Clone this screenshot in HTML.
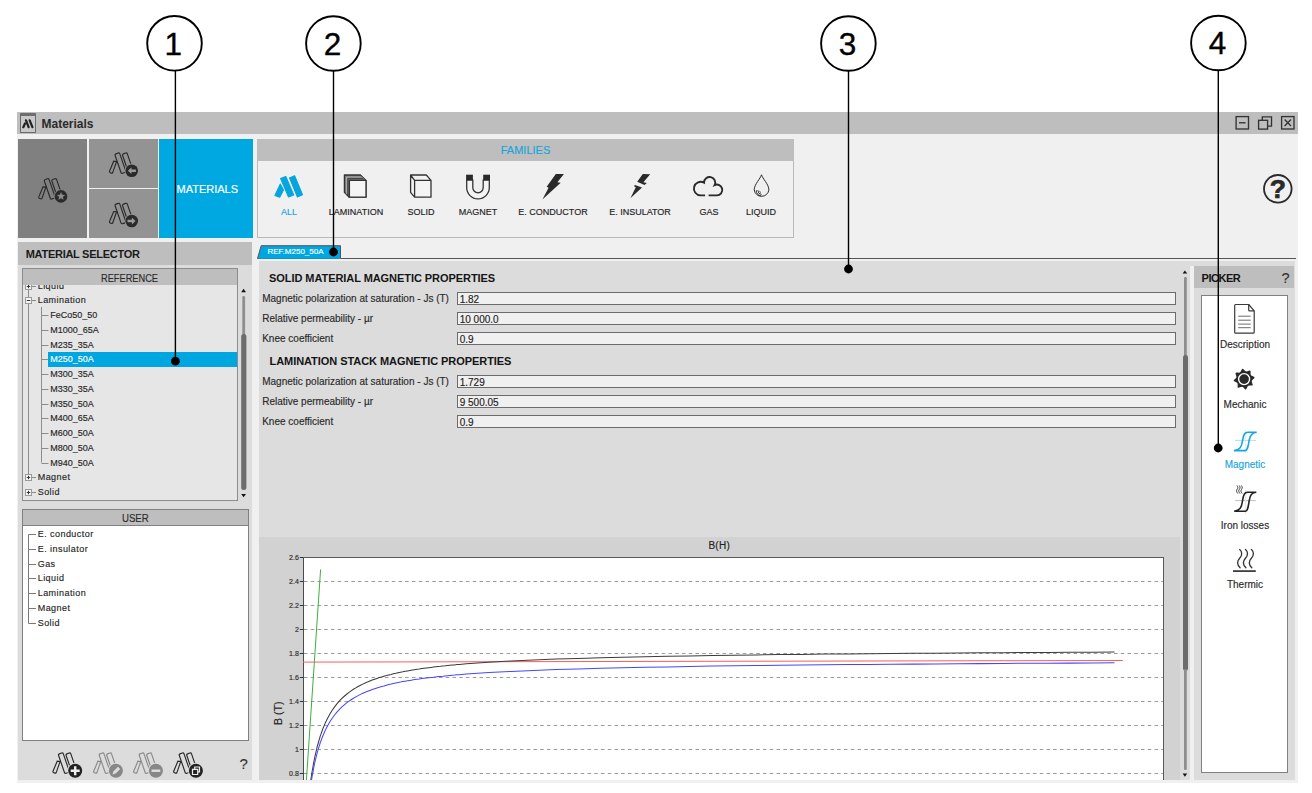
<!DOCTYPE html>
<html><head><meta charset="utf-8">
<style>
*{box-sizing:border-box;margin:0;padding:0}
html,body{width:1312px;height:793px;overflow:hidden;background:#fff;font-family:"Liberation Sans",sans-serif;color:#222}
.a{position:absolute}
.t{position:absolute;white-space:nowrap;line-height:1;-webkit-text-stroke:0.15px currentColor}
.t[style*="bold"]{-webkit-text-stroke:0}
</style></head><body>
<!-- window -->
<div class="a" style="left:17px;top:112px;width:1281px;height:22px;background:#bebebe"></div>
<div class="a" style="left:17px;top:134px;width:1281px;height:649px;background:#f0f0f0"></div>

<!-- tiles -->
<div class="a" style="left:18px;top:139px;width:69px;height:99px;background:#808080"></div>
<div class="a" style="left:89px;top:139px;width:69px;height:48.5px;background:#939393"></div>
<div class="a" style="left:89px;top:189px;width:69px;height:49px;background:#939393"></div>
<div class="a" style="left:159px;top:139px;width:94px;height:99px;background:#00a8e1"></div>


<!-- title bar content -->
<div class="a" style="left:20px;top:113px;width:16px;height:20px;background:#c9c9c9;border:1px solid #6a6a6a;border-top:3px solid #6e6e6e;border-radius:1px"></div>
<svg class="a" style="left:22px;top:119px" width="12" height="10" viewBox="0 0 12 10"><g stroke="#222" stroke-width="2.2" stroke-linecap="round"><line x1="1.3" y1="8.2" x2="3" y2="4.5"/><line x1="4" y1="1.3" x2="6.6" y2="8.2"/><line x1="7.7" y1="1.3" x2="10.4" y2="8.2"/></g></svg>
<div class="t" style="left:41.5px;top:117.5px;font-size:12px;font-weight:bold;color:#2a2a2a">Materials</div>
<svg class="a" style="left:1230px;top:112px" width="68" height="22" viewBox="0 0 68 22">
<g fill="none" stroke="#333" stroke-width="1.35">
<rect x="6.1" y="4.6" width="12.4" height="12.4"/><line x1="9" y1="10.8" x2="15.6" y2="10.8"/>
<rect x="28.6" y="8.3" width="9" height="8.8"/><path d="M32.3 8.3V4.9h9.2v9.2h-3.9"/>
<rect x="51.6" y="4.6" width="12.4" height="12.4"/><path d="M54.6 7.6l6.4 6.4M61 7.6l-6.4 6.4"/>
</g></svg>


<!-- tile icons -->
<svg class="a" style="left:0;top:0" width="260" height="240" viewBox="0 0 260 240">
<defs>
<g id="lgo" fill="none" stroke="#2a2a2a" stroke-width="1.15">
<path d="M1.2 19.2 L5.4 9.2 L8.3 9.4 L4.4 20.6 Q3.9 21.4 3 21.1 L1.6 20.5 Q1 20.1 1.2 19.2Z"/>
<rect x="-2.5" y="-10.3" width="5" height="20.6" rx="1.3" transform="translate(12.1 11.2) rotate(-19)"/>
<rect x="-2.5" y="-10.3" width="5" height="20.6" rx="1.3" transform="translate(19.6 11.2) rotate(-19)"/>
</g>
</defs>
<g transform="translate(37.6 177.7)"><use href="#lgo"/><circle cx="23.4" cy="18.7" r="7.1" fill="#808080"/><circle cx="23.4" cy="18.7" r="6.3" fill="#2a2a2a"/>
<path d="M23.4 14.3l1.2 2.7 2.9.3-2.2 1.9.7 2.9-2.6-1.5-2.6 1.5.7-2.9-2.2-1.9 2.9-.3z" fill="#8a8a8a"/></g>
<g transform="translate(108.3 152)"><use href="#lgo"/><circle cx="23.4" cy="18.7" r="7.1" fill="#939393"/><circle cx="23.4" cy="18.7" r="6.3" fill="#2a2a2a"/>
<path d="M19.6 18.7l3.6-3.4v2.2h4.4v2.4h-4.4v2.2z" fill="#9a9a9a"/></g>
<g transform="translate(108.3 202.3)"><use href="#lgo"/><circle cx="23.4" cy="18.7" r="7.1" fill="#939393"/><circle cx="23.4" cy="18.7" r="6.3" fill="#2a2a2a"/>
<path d="M27.2 18.7l-3.6-3.4v2.2h-4.4v2.4h4.4v2.2z" fill="#9a9a9a"/></g>
</svg>
<div class="t" style="left:176.5px;top:183.5px;font-size:11px;color:#fff">MATERIALS</div>

<!-- families -->
<div class="a" style="left:257px;top:139px;width:537px;height:99px;background:#f0f0f0;border:1px solid #b9b9b9;border-top:none"></div>
<div class="a" style="left:257px;top:139px;width:537px;height:22px;background:#bebebe"></div>


<div class="t" style="left:257px;top:145px;width:537px;text-align:center;font-size:11px;color:#1aa5dc">FAMILIES</div>
<svg class="a" style="left:250px;top:165px" width="550" height="40" viewBox="250 165 550 40">
<g fill="#05a5de" stroke="#05a5de" stroke-width="1.1" stroke-linejoin="round">
<path d="M280.6 178.6 L285.8 176.4 L293.7 195 L288.5 197Z"/>
<path d="M289.5 177.9 L294.6 175.7 L302.5 194.8 L297.3 196.9Z"/>
<path d="M280.3 184.1 L283.5 189.9 L279.7 197.2 L274.9 195.4Z"/>
</g>
<g fill="none" stroke="#333" stroke-width="1.3" stroke-linejoin="round">
<path d="M344.4 175 H360.4 L366 180.5 V197.2 H349.2 L344.4 192.2Z" fill="#777"/>
<path d="M346.4 177 H361.6 L366 181.4 M346.4 177 V194.2" stroke="#bdbdbd" stroke-width="0.8"/>
<path d="M347.9 178.6 H362.9 L366 181.7 M347.9 178.6 V195.7" stroke="#333" stroke-width="0.8"/>
<rect x="349.4" y="180.4" width="16.6" height="16.8" fill="#f4f4f4"/>
<path d="M410.6 175 H426.3 L431 180.4 V197.2 H414.6 L410.6 192.4Z M410.6 175 L414.6 180.4 H431 M414.6 180.4 V197.2" fill="#f4f4f4"/>
<path d="M466.7 180 V187.6 A11.3 11.3 0 0 0 489.3 187.6 V180 H483.2 V187.6 A5.2 5.2 0 0 1 472.8 187.6 V180Z" fill="#f4f4f4"/>
</g>
<g fill="#2a2a2a">
<rect x="466.1" y="174.7" width="6.8" height="5.4"/><rect x="483.2" y="174.7" width="6.8" height="5.4"/>
<path d="M555.8 174 H563.9 L557.4 182.3 L560.7 182.7 L542.4 199.4 L548.6 187.8 L546.7 186.8Z"/>
<path d="M642.8 174.1 L650.2 174.3 L643.4 182.2 L646.8 183.1 L644.5 185 L637.2 181.8Z"/><path d="M634.9 185 L642 187.4 L630.4 198.3 L635.8 187.2 L634 186.3Z"/>
</g>
<path d="M705.1 195.4 H700.7 A6.8 6.8 0 1 1 704 182.65 A5.6 5.6 0 1 1 714.6 185.1 A5.4 5.4 0 1 1 716.9 195.4 H708.6" fill="none" stroke="#2a2a2a" stroke-width="1.9"/>
<g fill="none" stroke="#2a2a2a" stroke-width="1">
<path d="M761.5 174.8 C760.5 178.5 754.2 184.5 754.2 189.8 A7.4 7.4 0 0 0 768.9 189.8 C768.9 184.5 762.5 178.5 761.5 174.8Z"/>
<path d="M756.3 190.2 A5.6 5.6 0 0 0 761.2 195.8" stroke-width="0.9"/>
<path d="M757.9 190.2 A4.3 4.3 0 0 0 761.6 194.5" stroke-width="0.9"/>
<path d="M759.3 191.2 L761 192.6" stroke-width="0.8"/>
</g>
</svg>
<div class="t" style="left:263px;top:208px;width:52px;text-align:center;font-size:9px;color:#1aa5dc">ALL</div>
<div class="t" style="left:325px;top:208px;width:62px;text-align:center;font-size:9px;color:#222">LAMINATION</div>
<div class="t" style="left:395px;top:208px;width:52px;text-align:center;font-size:9px;color:#222">SOLID</div>
<div class="t" style="left:448px;top:208px;width:60px;text-align:center;font-size:9px;color:#222">MAGNET</div>
<div class="t" style="left:513px;top:208px;width:80px;text-align:center;font-size:9px;color:#222">E. CONDUCTOR</div>
<div class="t" style="left:600px;top:208px;width:80px;text-align:center;font-size:9px;color:#222">E. INSULATOR</div>
<div class="t" style="left:683px;top:208px;width:52px;text-align:center;font-size:9px;color:#222">GAS</div>
<div class="t" style="left:735px;top:208px;width:52px;text-align:center;font-size:9px;color:#222">LIQUID</div>
<!-- help -->
<svg class="a" style="left:1260px;top:171px" width="36" height="36" viewBox="1260 171 36 36">
<circle cx="1277.8" cy="188.8" r="13.8" fill="none" stroke="#2a2a2a" stroke-width="1.8"/>
<text x="1277.9" y="198.4" text-anchor="middle" font-family="Liberation Sans" font-weight="bold" font-size="26.5" fill="#2a2a2a" stroke="#2a2a2a" stroke-width="0.7">?</text>
</svg>

<!-- left panel -->
<div class="a" style="left:18px;top:242px;width:234px;height:23px;background:#bebebe"></div>
<div class="a" style="left:18px;top:265px;width:234px;height:515px;background:#dcdcdc"></div>
<div class="a" style="left:22px;top:268px;width:216px;height:233px;background:#e6e6e6;border:1px solid #8c8c8c"></div>
<div class="a" style="left:23px;top:269px;width:214px;height:16px;background:#bebebe"></div>
<div class="a" style="left:22px;top:509px;width:227px;height:232px;background:#fff;border:1px solid #808080"></div>
<div class="a" style="left:23px;top:510px;width:225px;height:16px;background:#bebebe;border-bottom:1px solid #808080"></div>


<div class="t" style="left:25.7px;top:249px;font-size:11px;font-weight:bold;color:#1a1a1a;letter-spacing:-0.27px">MATERIAL SELECTOR</div>
<div class="t" style="left:101.4px;top:272.6px;font-size:11px;color:#2a2a2a;transform:scaleX(0.84);transform-origin:0 0">REFERENCE</div>
<div class="a" style="left:23px;top:285px;width:214px;height:215px;overflow:hidden">
<svg class="a" style="left:0;top:0" width="214" height="215" viewBox="23 285 214 215"><g stroke="#8c8c8c" stroke-width="1" fill="none"><line x1="28.5" y1="285" x2="28.5" y2="474.4"/><line x1="41.5" y1="307" x2="41.5" y2="462.6"/><line x1="31.5" y1="286.5" x2="36" y2="286.5"/><line x1="31.5" y1="300.5" x2="36" y2="300.5"/><line x1="41.5" y1="315.5" x2="48.5" y2="315.5"/><line x1="41.5" y1="330.5" x2="48.5" y2="330.5"/><line x1="41.5" y1="345.5" x2="48.5" y2="345.5"/><line x1="41.5" y1="359.5" x2="48" y2="359.5"/><line x1="41.5" y1="374.5" x2="48.5" y2="374.5"/><line x1="41.5" y1="389.5" x2="48.5" y2="389.5"/><line x1="41.5" y1="404.5" x2="48.5" y2="404.5"/><line x1="41.5" y1="418.5" x2="48.5" y2="418.5"/><line x1="41.5" y1="433.5" x2="48.5" y2="433.5"/><line x1="41.5" y1="448.5" x2="48.5" y2="448.5"/><line x1="41.5" y1="463.5" x2="48.5" y2="463.5"/><line x1="31.5" y1="477.5" x2="36" y2="477.5"/><line x1="31.5" y1="492.5" x2="36" y2="492.5"/></g><rect x="25.5" y="283.5" width="6" height="6" fill="#f4f4f4" stroke="#9a9a9a" stroke-width="1"/><line x1="26.8" y1="286.5" x2="30.2" y2="286.5" stroke="#333" stroke-width="1"/><line x1="28.5" y1="284.8" x2="28.5" y2="288.2" stroke="#333" stroke-width="1"/><rect x="25.5" y="297.5" width="6" height="6" fill="#f4f4f4" stroke="#9a9a9a" stroke-width="1"/><line x1="26.8" y1="300.5" x2="30.2" y2="300.5" stroke="#333" stroke-width="1"/><rect x="25.5" y="474.5" width="6" height="6" fill="#f4f4f4" stroke="#9a9a9a" stroke-width="1"/><line x1="26.8" y1="477.5" x2="30.2" y2="477.5" stroke="#333" stroke-width="1"/><line x1="28.5" y1="475.8" x2="28.5" y2="479.2" stroke="#333" stroke-width="1"/><rect x="25.5" y="489.5" width="6" height="6" fill="#f4f4f4" stroke="#9a9a9a" stroke-width="1"/><line x1="26.8" y1="492.5" x2="30.2" y2="492.5" stroke="#333" stroke-width="1"/><line x1="28.5" y1="490.8" x2="28.5" y2="494.2" stroke="#333" stroke-width="1"/></svg>
<div class="t" style="left:14.7px;top:-3.45px;font-size:9px;color:#262626;letter-spacing:0.45px">Liquid</div>
<div class="t" style="left:14.7px;top:11.30px;font-size:9px;color:#262626;letter-spacing:0.45px">Lamination</div>
<div class="t" style="left:27.2px;top:26.05px;font-size:9px;color:#262626">FeCo50_50</div>
<div class="t" style="left:27.2px;top:40.80px;font-size:9px;color:#262626">M1000_65A</div>
<div class="t" style="left:27.2px;top:55.55px;font-size:9px;color:#262626">M235_35A</div>
<div class="a" style="left:25px;top:66.8px;width:189px;height:15px;background:#00a6df"></div>
<div class="t" style="left:27.2px;top:70.30px;font-size:9px;color:#fff">M250_50A</div>
<div class="t" style="left:27.2px;top:85.05px;font-size:9px;color:#262626">M300_35A</div>
<div class="t" style="left:27.2px;top:99.80px;font-size:9px;color:#262626">M330_35A</div>
<div class="t" style="left:27.2px;top:114.55px;font-size:9px;color:#262626">M350_50A</div>
<div class="t" style="left:27.2px;top:129.30px;font-size:9px;color:#262626">M400_65A</div>
<div class="t" style="left:27.2px;top:144.05px;font-size:9px;color:#262626">M600_50A</div>
<div class="t" style="left:27.2px;top:158.80px;font-size:9px;color:#262626">M800_50A</div>
<div class="t" style="left:27.2px;top:173.55px;font-size:9px;color:#262626">M940_50A</div>
<div class="t" style="left:14.7px;top:188.30px;font-size:9px;color:#262626;letter-spacing:0.45px">Magnet</div>
<div class="t" style="left:14.7px;top:203.05px;font-size:9px;color:#262626;letter-spacing:0.45px">Solid</div>
</div>
<!-- ref scrollbar -->
<svg class="a" style="left:238px;top:284px" width="12" height="220" viewBox="238 284 12 220">
<path d="M241.2 292.3 L243.6 288.8 L246 292.3Z" fill="#111"/>
<rect x="242.3" y="296" width="2.8" height="40" rx="1.2" fill="#8e8e8e"/>
<rect x="241.2" y="334" width="5.2" height="156" rx="2.5" fill="#6c6c6c"/>
<path d="M241.2 494 L243.6 497.3 L246 494Z" fill="#111"/>
</svg>
<div class="t" style="left:122px;top:512.6px;font-size:11px;color:#2a2a2a;transform:scaleX(0.875);transform-origin:0 0">USER</div>
<svg class="a" style="left:0;top:0" width="260" height="793" viewBox="0 0 260 793"><g stroke="#7a7a7a" stroke-width="1" fill="none"><path d="M36 534.5 H28.5 V623.5 H36"/><line x1="28.5" y1="549.5" x2="36" y2="549.5"/><line x1="28.5" y1="564.5" x2="36" y2="564.5"/><line x1="28.5" y1="578.5" x2="36" y2="578.5"/><line x1="28.5" y1="593.5" x2="36" y2="593.5"/><line x1="28.5" y1="608.5" x2="36" y2="608.5"/></g></svg>
<div class="t" style="left:37.7px;top:530.00px;font-size:9px;color:#262626;letter-spacing:0.45px">E. conductor</div>
<div class="t" style="left:37.7px;top:544.75px;font-size:9px;color:#262626;letter-spacing:0.45px">E. insulator</div>
<div class="t" style="left:37.7px;top:559.50px;font-size:9px;color:#262626;letter-spacing:0.45px">Gas</div>
<div class="t" style="left:37.7px;top:574.25px;font-size:9px;color:#262626;letter-spacing:0.45px">Liquid</div>
<div class="t" style="left:37.7px;top:589.00px;font-size:9px;color:#262626;letter-spacing:0.45px">Lamination</div>
<div class="t" style="left:37.7px;top:603.75px;font-size:9px;color:#262626;letter-spacing:0.45px">Magnet</div>
<div class="t" style="left:37.7px;top:618.50px;font-size:9px;color:#262626;letter-spacing:0.45px">Solid</div>
<!-- bottom toolbar -->
<svg class="a" style="left:0;top:740px" width="260" height="45" viewBox="0 740 260 45">
<g transform="translate(51.8 752)"><use href="#lgo"/><circle cx="23.4" cy="18.7" r="7.9" fill="#dcdcdc"/><circle cx="23.4" cy="18.7" r="7" fill="#222"/><path d="M22.2 14.2h2.4v3.3h3.3v2.4h-3.3v3.3h-2.4v-3.3h-3.3v-2.4h3.3z" fill="#eee"/></g>
<g transform="translate(92.5 752)" opacity="0.45"><use href="#lgo"/><circle cx="23.4" cy="18.7" r="7.9" fill="#dcdcdc"/><circle cx="23.4" cy="18.7" r="7" fill="#222"/><path d="M20 22.5l1-3.2 4.5-4.5 2.2 2.2-4.5 4.5z" fill="#ddd"/></g>
<g transform="translate(132.5 752)" opacity="0.45"><use href="#lgo"/><circle cx="23.4" cy="18.7" r="7.9" fill="#dcdcdc"/><circle cx="23.4" cy="18.7" r="7" fill="#222"/><rect x="19" y="17.5" width="8.8" height="2.5" fill="#ddd"/></g>
<g transform="translate(172.5 752)"><use href="#lgo"/><circle cx="23.4" cy="18.7" r="7.9" fill="#dcdcdc"/><circle cx="23.4" cy="18.7" r="7" fill="#222"/><path d="M20 17.3h5.2v5.2h-5.2z M22.2 17.3v-2.3h4.8v4.8h-1.8" fill="none" stroke="#eee" stroke-width="1.2"/></g>
</svg>
<div class="t" style="left:239.6px;top:756px;font-size:15px;color:#333">?</div>

<!-- property panel -->
<div class="a" style="left:259px;top:261px;width:1036px;height:519px;background:#dcdcdc"></div>
<div class="a" style="left:259px;top:537px;width:921px;height:243px;background:#d2d2d2"></div>
<div class="a" style="left:341px;top:258px;width:955px;height:1px;background:#555"></div>


<!-- tab -->
<svg class="a" style="left:255px;top:243px" width="90" height="18" viewBox="255 243 90 18">
<path d="M257.5 258.5 L261.2 245.7 H340.5 V258.5Z" fill="#00a6df" stroke="#555" stroke-width="1"/>
<rect x="258.6" y="257.2" width="81.4" height="1.6" fill="#00a6df"/>
</svg>
<div class="t" style="left:267.5px;top:247.6px;font-size:8px;color:#fff">REF.M250_50A</div>
<div class="t" style="left:269px;top:272.6px;font-size:11px;font-weight:bold;color:#151515;letter-spacing:-0.06px">SOLID MATERIAL MAGNETIC PROPERTIES</div>
<div class="t" style="left:269.5px;top:355.7px;font-size:11px;font-weight:bold;color:#151515;letter-spacing:-0.06px">LAMINATION STACK MAGNETIC PROPERTIES</div>
<div class="t" style="left:262.2px;top:293.8px;font-size:10px;color:#2a2a2a">Magnetic polarization at saturation - Js (T)</div>
<div class="a" style="left:456.8px;top:292px;width:719.5px;height:13px;background:#f0f0f0;border:1px solid #6c6c6c"></div>
<div class="t" style="left:459.7px;top:294.5px;font-size:10px;color:#222">1.82</div>
<div class="t" style="left:262.2px;top:313.9px;font-size:10px;color:#2a2a2a">Relative permeability - µr</div>
<div class="a" style="left:456.8px;top:312px;width:719.5px;height:13px;background:#f0f0f0;border:1px solid #6c6c6c"></div>
<div class="t" style="left:459.7px;top:314.5px;font-size:10px;color:#222">10 000.0</div>
<div class="t" style="left:262.2px;top:333.9px;font-size:10px;color:#2a2a2a">Knee coefficient</div>
<div class="a" style="left:456.8px;top:332px;width:719.5px;height:13px;background:#f0f0f0;border:1px solid #6c6c6c"></div>
<div class="t" style="left:459.7px;top:334.5px;font-size:10px;color:#222">0.9</div>
<div class="t" style="left:262.2px;top:377.1px;font-size:10px;color:#2a2a2a">Magnetic polarization at saturation - Js (T)</div>
<div class="a" style="left:456.8px;top:375px;width:719.5px;height:13px;background:#f0f0f0;border:1px solid #6c6c6c"></div>
<div class="t" style="left:459.7px;top:377.5px;font-size:10px;color:#222">1.729</div>
<div class="t" style="left:262.2px;top:397.1px;font-size:10px;color:#2a2a2a">Relative permeability - µr</div>
<div class="a" style="left:456.8px;top:395px;width:719.5px;height:13px;background:#f0f0f0;border:1px solid #6c6c6c"></div>
<div class="t" style="left:459.7px;top:397.5px;font-size:10px;color:#222">9 500.05</div>
<div class="t" style="left:262.2px;top:417.1px;font-size:10px;color:#2a2a2a">Knee coefficient</div>
<div class="a" style="left:456.8px;top:415px;width:719.5px;height:13px;background:#f0f0f0;border:1px solid #6c6c6c"></div>
<div class="t" style="left:459.7px;top:417.5px;font-size:10px;color:#222">0.9</div>
<!-- prop scrollbar -->
<svg class="a" style="left:1180px;top:262px" width="12" height="520" viewBox="1180 262 12 520">
<path d="M1182.6 273.6 L1184.9 270.4 L1187.2 273.6Z" fill="#111"/>
<rect x="1184" y="277" width="2.8" height="80" rx="1.2" fill="#8e8e8e"/>
<rect x="1183" y="355" width="5" height="316" rx="2.4" fill="#6c6c6c"/>
<rect x="1184" y="669" width="2.8" height="101" rx="1.2" fill="#8e8e8e"/>
<path d="M1182.6 773.6 L1184.9 776.8 L1187.2 773.6Z" fill="#111"/>
</svg>
<!-- chart labels -->
<div class="t" style="left:708.4px;top:540.8px;font-size:10px;color:#222;letter-spacing:0.3px">B(H)</div>
<div class="t" style="left:258.8px;top:553.5px;width:40px;text-align:right;font-size:7px;color:#2a2a2a">2.6</div>
<div class="t" style="left:258.8px;top:577.5px;width:40px;text-align:right;font-size:7px;color:#2a2a2a">2.4</div>
<div class="t" style="left:258.8px;top:601.5px;width:40px;text-align:right;font-size:7px;color:#2a2a2a">2.2</div>
<div class="t" style="left:258.8px;top:625.5px;width:40px;text-align:right;font-size:7px;color:#2a2a2a">2</div>
<div class="t" style="left:258.8px;top:649.5px;width:40px;text-align:right;font-size:7px;color:#2a2a2a">1.8</div>
<div class="t" style="left:258.8px;top:673.5px;width:40px;text-align:right;font-size:7px;color:#2a2a2a">1.6</div>
<div class="t" style="left:258.8px;top:697.5px;width:40px;text-align:right;font-size:7px;color:#2a2a2a">1.4</div>
<div class="t" style="left:258.8px;top:721.5px;width:40px;text-align:right;font-size:7px;color:#2a2a2a">1.2</div>
<div class="t" style="left:258.8px;top:745.5px;width:40px;text-align:right;font-size:7px;color:#2a2a2a">1</div>
<div class="t" style="left:258.8px;top:769.5px;width:40px;text-align:right;font-size:7px;color:#2a2a2a">0.8</div>
<svg class="a" style="left:295px;top:550px" width="12" height="235" viewBox="295 550 12 235"><g stroke="#333" stroke-width="1"><line x1="299.8" x2="303" y1="557.5" y2="557.5"/><line x1="299.8" x2="303" y1="581.5" y2="581.5"/><line x1="299.8" x2="303" y1="605.5" y2="605.5"/><line x1="299.8" x2="303" y1="629.5" y2="629.5"/><line x1="299.8" x2="303" y1="653.5" y2="653.5"/><line x1="299.8" x2="303" y1="677.5" y2="677.5"/><line x1="299.8" x2="303" y1="701.5" y2="701.5"/><line x1="299.8" x2="303" y1="725.5" y2="725.5"/><line x1="299.8" x2="303" y1="749.5" y2="749.5"/><line x1="299.8" x2="303" y1="773.5" y2="773.5"/></g></svg>
<div class="t" style="left:266px;top:708px;width:24px;text-align:center;font-size:10.5px;color:#222;transform:rotate(-90deg);transform-origin:50% 50%">B (T)</div>

<!-- picker -->
<div class="a" style="left:1190px;top:265.8px;width:4px;height:514.2px;background:#f0f0f0"></div>
<div class="a" style="left:1194px;top:265.8px;width:100.4px;height:22.2px;background:#bebebe"></div>
<div class="a" style="left:1201px;top:295px;width:87px;height:478px;background:#fff;border:1px solid #808080"></div>

<!-- chart -->
<div class="a" style="left:303px;top:557px;width:861px;height:223px;background:#fff;border-left:1.5px solid #4a4a4a;border-top:1px solid #5a5a5a;border-right:1px solid #5a5a5a"></div>
<svg class="a" style="left:0;top:0" width="1312" height="793" viewBox="0 0 1312 793">
<defs><clipPath id="pc"><rect x="303" y="557" width="861" height="223"/></clipPath></defs>
<g stroke="#9a9a9a" stroke-width="1" stroke-dasharray="3.5 3.25">
<line x1="304" x2="1163" y1="581.5" y2="581.5"/><line x1="304" x2="1163" y1="605.5" y2="605.5"/>
<line x1="304" x2="1163" y1="629.5" y2="629.5"/><line x1="304" x2="1163" y1="653.5" y2="653.5"/>
<line x1="304" x2="1163" y1="677.5" y2="677.5"/><line x1="304" x2="1163" y1="701.5" y2="701.5"/>
<line x1="304" x2="1163" y1="725.5" y2="725.5"/><line x1="304" x2="1163" y1="749.5" y2="749.5"/>
<line x1="304" x2="1163" y1="773.5" y2="773.5"/>
</g>
<g clip-path="url(#pc)" fill="none">
<line x1="303" y1="662.1" x2="1122.75" y2="660.5" stroke="#ff5a5a" stroke-width="1"/>
<path d="M300.4 869 L320.6 569.4" stroke="#3cb03c" stroke-width="1"/>
<path d="M309.2 792.0L309.6 788.6L310.1 785.5L310.5 782.4L310.9 779.5L311.3 776.7L311.7 774.0L312.1 771.5L312.6 769.0L313.0 766.6L313.4 764.3L313.8 762.1L314.2 760.0L314.6 758.0L315.0 756.0L315.5 754.1L315.9 752.3L316.3 750.5L316.7 748.8L317.1 747.1L317.5 745.5L318.0 744.0L318.4 742.5L318.8 741.0L319.2 739.6L319.6 738.3L320.0 736.9L320.4 735.6L320.9 734.4L321.3 733.2L321.7 732.0L322.1 730.8L322.5 729.7L322.9 728.6L323.4 727.6L323.8 726.6L324.2 725.6L324.6 724.6L325.0 723.6L325.4 722.7L325.8 721.8L326.3 720.9L326.7 720.0L327.1 719.2L327.5 718.4L329.9 714.1L332.2 710.3L334.6 706.9L336.9 703.9L339.3 701.2L341.6 698.7L344.0 696.5L346.3 694.5L348.7 692.6L351.1 690.9L353.4 689.3L355.8 687.9L358.1 686.5L360.5 685.2L362.8 684.1L365.2 683.0L367.5 681.9L369.9 681.0L372.2 680.1L374.6 679.2L376.9 678.4L379.3 677.6L381.7 676.9L384.0 676.2L386.4 675.6L388.7 674.9L391.1 674.4L393.4 673.8L395.8 673.3L398.1 672.7L400.5 672.2L402.8 671.8L405.2 671.3L407.5 670.9L409.9 670.5L412.3 670.1L414.6 669.7L417.0 669.3L419.3 669.0L421.7 668.6L424.0 668.3L426.4 668.0L428.7 667.7L431.1 667.4L433.4 667.1L435.8 666.8L438.2 666.5L440.5 666.3L442.9 666.0L445.2 665.8L447.6 665.5L449.9 665.3L452.3 665.1L454.6 664.9L457.0 664.6L459.3 664.4L461.7 664.2L464.0 664.0L466.4 663.8L488.7 662.3L511.1 661.0L533.4 660.0L555.8 659.1L578.1 658.4L600.5 657.7L622.8 657.2L645.2 656.7L667.5 656.2L689.9 655.9L712.2 655.5L734.6 655.2L756.9 654.9L779.3 654.6L801.6 654.4L824.0 654.1L846.3 653.9L868.7 653.7L891.0 653.5L913.4 653.3L935.7 653.2L958.1 653.0L980.4 652.8L1002.8 652.7L1025.1 652.5L1047.5 652.4L1069.8 652.3L1092.2 652.2L1114.5 652.0" stroke="#3c3c3c" stroke-width="1.05"/>
<path d="M309.6 792.7L310.1 789.6L310.5 786.7L310.9 784.0L311.3 781.3L311.7 778.8L312.1 776.3L312.6 774.0L313.0 771.7L313.4 769.6L313.8 767.5L314.2 765.5L314.6 763.5L315.0 761.7L315.5 759.9L315.9 758.1L316.3 756.4L316.7 754.8L317.1 753.2L317.5 751.7L318.0 750.2L318.4 748.8L318.8 747.4L319.2 746.1L319.6 744.8L320.0 743.5L320.4 742.3L320.9 741.1L321.3 740.0L321.7 738.8L322.1 737.8L322.5 736.7L322.9 735.7L323.4 734.7L323.8 733.7L324.2 732.7L324.6 731.8L325.0 730.9L325.4 730.0L325.8 729.2L326.3 728.3L326.7 727.5L327.1 726.7L327.5 725.9L329.9 721.8L332.2 718.2L334.6 715.0L336.9 712.1L339.3 709.6L341.6 707.2L344.0 705.1L346.3 703.2L348.7 701.4L351.1 699.8L353.4 698.3L355.8 696.9L358.1 695.6L360.5 694.4L362.8 693.3L365.2 692.3L367.5 691.3L369.9 690.4L372.2 689.5L374.6 688.7L376.9 687.9L379.3 687.2L381.7 686.5L384.0 685.9L386.4 685.2L388.7 684.6L391.1 684.1L393.4 683.5L395.8 683.0L398.1 682.5L400.5 682.1L402.8 681.6L405.2 681.2L407.5 680.8L409.9 680.4L412.3 680.0L414.6 679.6L417.0 679.3L419.3 679.0L421.7 678.6L424.0 678.3L426.4 678.0L428.7 677.7L431.1 677.4L433.4 677.2L435.8 676.9L438.2 676.6L440.5 676.4L442.9 676.2L445.2 675.9L447.6 675.7L449.9 675.5L452.3 675.3L454.6 675.1L457.0 674.8L459.3 674.7L461.7 674.5L464.0 674.3L466.4 674.1L488.7 672.6L511.1 671.4L533.4 670.4L555.8 669.6L578.1 668.9L600.5 668.3L622.8 667.7L645.2 667.3L667.5 666.9L689.9 666.5L712.2 666.1L734.6 665.8L756.9 665.6L779.3 665.3L801.6 665.0L824.0 664.8L846.3 664.6L868.7 664.4L891.0 664.2L913.4 664.1L935.7 663.9L958.1 663.7L980.4 663.6L1002.8 663.4L1025.1 663.3L1047.5 663.2L1069.8 663.1L1092.2 662.9L1114.5 662.8" stroke="#4646ff" stroke-width="1.05"/>
</g>
</svg>


<div class="t" style="left:1201.5px;top:272.6px;font-size:11px;font-weight:bold;color:#151515;letter-spacing:-0.45px">PICKER</div>
<div class="t" style="left:1281.6px;top:270.6px;font-size:14.5px;color:#333">?</div>
<svg class="a" style="left:1202px;top:296px" width="86" height="300" viewBox="1202 296 86 300">
<g fill="none" stroke="#3a3a3a" stroke-width="1.2" stroke-linejoin="round">
<path d="M1248.7 304.5 H1235.6 Q1234.7 304.5 1234.7 305.4 V332.3 Q1234.7 333.2 1235.6 333.2 H1253.3 Q1254.2 333.2 1254.2 332.3 V310.9 Z"/>
<path d="M1248.7 304.5 V310 Q1248.7 310.9 1249.6 310.9 H1254.2"/>
</g>
<g stroke="#6a6a6a" stroke-width="1"><line x1="1238.2" x2="1250.7" y1="316.2" y2="316.2"/><line x1="1238.2" x2="1250.7" y1="320.2" y2="320.2"/><line x1="1238.2" x2="1250.7" y1="324.1" y2="324.1"/><line x1="1238.2" x2="1250.7" y1="327.7" y2="327.7"/></g>
<g transform="translate(1244.1 379.1)" fill="#2a2a2a"><path d="M-1.52 -9.58 L1.54 -6.42 L5.70 -7.85 L5.63 -3.45 L9.58 -1.52 L6.42 1.54 L7.85 5.70 L3.45 5.63 L1.52 9.58 L-1.54 6.42 L-5.70 7.85 L-5.63 3.45 L-9.58 1.52 L-6.42 -1.54 L-7.85 -5.70 L-3.45 -5.63Z" stroke="#2a2a2a" stroke-width="1.6" stroke-linejoin="round"/><circle r="7.9"/><circle r="5.5" fill="none" stroke="#fff" stroke-width="1.4"/></g>
<g stroke="#9bd6ef" stroke-width="0.8"><line x1="1235" x2="1256" y1="440.4" y2="440.4"/></g>
<g stroke="#d0ecf8" stroke-width="0.8"><line x1="1245.4" x2="1245.4" y1="429.5" y2="453.5"/></g>
<path d="M1234 450.6 C1240 449.8 1241.6 447 1242.5 441 C1243.5 434 1244.8 432.3 1248 432.2 H1256.7 C1252.5 432.4 1250.3 434.3 1249.2 440 C1248.2 447 1247.4 450.5 1245 450.6 Z" fill="none" stroke="#1aa5dc" stroke-width="1.6"/>
<g stroke="#aaa" stroke-width="0.8"><line x1="1235.3" x2="1255.8" y1="500.6" y2="500.6"/></g>
<g stroke="#ddd" stroke-width="0.8"><line x1="1245.6" x2="1245.6" y1="490" y2="514"/></g>
<path d="M1234.2 511.2 C1240 510.5 1241.6 507.5 1242.5 501 C1243.5 494 1244.6 492.4 1247.6 492.3 H1256.3 C1252 492.5 1250.2 494.5 1249.2 500.6 C1248.2 507.5 1247.5 511.1 1245.6 511.2 Z" fill="none" stroke="#222" stroke-width="1.6"/>
<g fill="none" stroke="#333" stroke-width="1">
<path d="M1237 485.5 C1238.2 487 1237.9 488.3 1237.1 489.4 C1236.2 490.6 1236.4 491.9 1237.8 493.5"/>
<path d="M1239.2 485.5 C1240.4 487 1240.1 488.3 1239.3 489.4 C1238.4 490.6 1238.6 491.9 1240 493.5"/>
<path d="M1241.4 485.5 C1242.6 487 1242.3 488.3 1241.5 489.4 C1240.6 490.6 1240.8 491.9 1242.2 493.5"/>
</g>
<g fill="none" stroke="#333" stroke-width="1.3" stroke-linecap="round">
<path d="M1239.7 549.4 C1242.3 551.6 1242.3 555.2 1240 557.8 C1237.4 560.7 1235.9 563.8 1240.1 567.8"/>
<path d="M1245.5 549.4 C1248.1 551.6 1248.1 555.2 1245.8 557.8 C1243.2 560.7 1241.7 563.8 1245.9 567.8"/>
<path d="M1251.4 549.4 C1254 551.6 1254 555.2 1251.7 557.8 C1249.1 560.7 1247.6 563.8 1251.8 567.8"/>
</g>
<line x1="1233" x2="1255.8" y1="571.1" y2="571.1" stroke="#333" stroke-width="1.7"/>
</svg>
<div class="t" style="left:1202px;top:339.6px;width:86px;text-align:center;font-size:10px;color:#2a2a2a">Description</div>
<div class="t" style="left:1202px;top:399.6px;width:86px;text-align:center;font-size:10px;color:#2a2a2a">Mechanic</div>
<div class="t" style="left:1202px;top:460.4px;width:86px;text-align:center;font-size:10px;color:#1aa5dc">Magnetic</div>
<div class="t" style="left:1202px;top:520.9px;width:86px;text-align:center;font-size:10px;color:#2a2a2a">Iron losses</div>
<div class="t" style="left:1202px;top:580.4px;width:86px;text-align:center;font-size:10px;color:#2a2a2a">Thermic</div>


<!-- callouts -->
<svg class="a" style="left:0;top:0" width="1312" height="793" viewBox="0 0 1312 793">
<g fill="none" stroke="#000" stroke-width="1.9">
<circle cx="174.5" cy="43.3" r="27.3"/><circle cx="333.4" cy="43.5" r="27.3"/><circle cx="848.4" cy="43.5" r="27.3"/><circle cx="1218.4" cy="43" r="27.3"/>
</g>
<g stroke="#000" stroke-width="1.4">
<line x1="175.4" y1="70.6" x2="175.4" y2="361.2"/><line x1="333.5" y1="70.8" x2="333.5" y2="252"/><line x1="848.5" y1="70.8" x2="848.5" y2="269"/><line x1="1218.3" y1="70.3" x2="1218.3" y2="448"/>
</g>
<g fill="#000"><circle cx="175.4" cy="361.2" r="4.4"/><circle cx="333.5" cy="252" r="4.4"/><circle cx="848.5" cy="269" r="4.4"/><circle cx="1218.2" cy="448" r="4.4"/></g>
<g font-family="Liberation Sans" font-size="31.5" fill="#000" stroke="#000" stroke-width="0.35" text-anchor="middle">
<text x="173.2" y="55">1</text><text x="332.4" y="55">2</text><text x="847.6" y="55">3</text><text x="1217.6" y="53.8">4</text>
</g>
</svg>
</body></html>
